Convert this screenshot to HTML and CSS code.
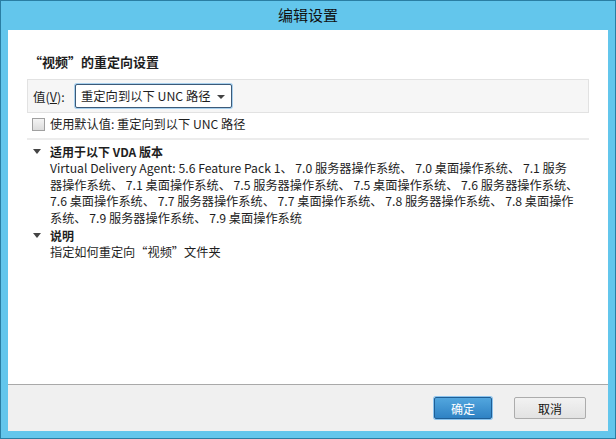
FILE: index.html
```html
<!DOCTYPE html>
<html>
<head>
<meta charset="utf-8">
<link rel="stylesheet" href="styles.css">
</head>
<body>
<div class="window">
  <div class="titlebar">编辑设置</div>
  <div class="client">
    <div class="content">
      <h1 class="heading">“视频”的重定向设置</h1>
      <div class="value-row">
        <span class="label">值(<u>V</u>):</span>
        <div class="select">
          <span>重定向到以下 UNC 路径</span>
          <span class="arrow"></span>
        </div>
      </div>
      <label class="check-row">
        <span class="checkbox"></span>
        <span>使用默认值: 重定向到以下 UNC 路径</span>
      </label>
      <div class="sep"></div>
      <div class="section">
        <div class="sec-title"><span class="tri"></span>适用于以下 VDA 版本</div>
        <div class="sec-body">
          <div class="line">Virtual Delivery Agent: 5.6 Feature Pack 1、 7.0 服务器操作系统、 7.0 桌面操作系统、 7.1 服务</div>
          <div class="line">器操作系统、 7.1 桌面操作系统、 7.5 服务器操作系统、 7.5 桌面操作系统、 7.6 服务器操作系统、</div>
          <div class="line">7.6 桌面操作系统、 7.7 服务器操作系统、 7.7 桌面操作系统、 7.8 服务器操作系统、 7.8 桌面操作</div>
          <div class="line">系统、 7.9 服务器操作系统、 7.9 桌面操作系统</div>
        </div>
      </div>
      <div class="section">
        <div class="sec-title"><span class="tri"></span>说明</div>
        <div class="sec-body">
          <div class="line">指定如何重定向“视频”文件夹</div>
        </div>
      </div>
    </div>
    <div class="footer">
      <button class="btn primary">确定</button>
      <button class="btn">取消</button>
    </div>
  </div>
</div>
</body>
</html>
```
FILE: styles.css
```css
* { box-sizing: border-box; }
html, body { margin: 0; padding: 0; }
body {
  width: 616px;
  height: 439px;
  font-family: "Noto Sans CJK SC", "Noto Sans", sans-serif;
  font-size: 12px;
  color: #1e1e1e;
  overflow: hidden;
}
.window {
  width: 616px;
  height: 439px;
  background: #63c6ec;
  border: 1px solid #2a7ea3;
  display: flex;
  flex-direction: column;
  padding: 0 7px 7px 7px;
}
.titlebar {
  height: 29px;
  flex: none;
  text-align: center;
  font-size: 15px;
  line-height: 28px;
  color: #111;
}
.client {
  flex: 1;
  background: #fff;
  display: flex;
  flex-direction: column;
}
.content {
  flex: 1;
  padding: 23px 19px 0 19px;
}
.heading {
  margin: 0 0 8px 2px;
  font-size: 13px;
  font-weight: bold;
  line-height: 18px;
}
.value-row {
  height: 34px;
  background: #f6f6f6;
  border: 1px solid #e2e2e2;
  display: flex;
  align-items: center;
  padding-left: 5px;
  gap: 0;
}
.label { width: 42px; font-size: 12.5px; }
.label u { text-decoration: underline; }
.select {
  height: 24px;
  width: 157px;
  border: 1px solid #3c5a78;
  box-shadow: 0 0 0 1px #a8d0ee;
  border-radius: 2px;
  background: #fff;
  display: flex;
  align-items: center;
  padding-left: 5px;
  gap: 6px;
  font-size: 12.3px;
}
.arrow {
  width: 0; height: 0;
  border-left: 4px solid transparent;
  border-right: 4px solid transparent;
  border-top: 4px solid #444;
  margin-top: 2px;
}
.check-row {
  display: flex;
  align-items: center;
  gap: 5px;
  height: 22px;
  padding-left: 5px;
  font-size: 12.2px;
}
.checkbox {
  width: 13px; height: 13px;
  border: 1px solid #a0a0a0;
  background: linear-gradient(#f4f4f4, #dcdcdc);
}
.sep {
  height: 2px;
  background: #ececec;
  margin: 3px 0 3px 0;
}
.sec-title {
  font-weight: bold;
  line-height: 17px;
  display: flex;
  align-items: center;
  padding-left: 6px;
}
.tri {
  width: 0; height: 0;
  border-left: 4px solid transparent;
  border-right: 4px solid transparent;
  border-top: 5px solid #444;
  margin-right: 9px;
}
.sec-body {
  padding-left: 23px;
  line-height: 16.7px;
  font-size: 12.2px;
}
.line { white-space: nowrap; }
.footer {
  flex: none;
  height: 47px;
  background: #f0f0f0;
  border-top: 1px solid #a9a9a9;
  display: flex;
  justify-content: flex-end;
  align-items: center;
  padding-right: 22px;
  gap: 22px;
}
.btn {
  width: 58px;
  height: 22px;
  font-family: inherit;
  font-size: 12px;
  border: 1px solid #acacac;
  border-radius: 2px;
  background: linear-gradient(#f2f2f2, #e2e2e2);
  color: #111;
  padding: 0;
}
.btn + .btn { width: 72px; }
.primary {
  background: linear-gradient(#52a6de, #2f82c4);
  border: 1px solid #1f5f96;
  box-shadow: 0 0 0 1px #8cc4ee;
  color: #fff;
}
```
